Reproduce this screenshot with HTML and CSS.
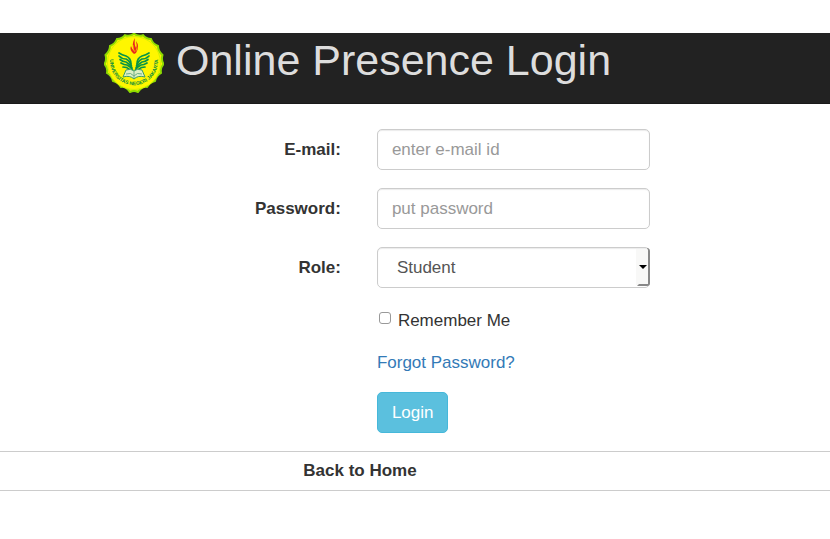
FILE: index.html
```html
<!DOCTYPE html>
<html lang="en">
<head>
<meta charset="utf-8">
<title>Online Presence Login</title>
<link rel="stylesheet" href="styles.css">
</head>
<body>
<header class="banner">
  <svg class="logo" viewBox="0 0 60 60" role="img" aria-label="Universitas Negeri Jakarta">
    <defs>
      <path id="ring" d="M6.800 22A24 24 0 1 0 53.200 22"/>
      <g id="wing" fill="none" stroke="#079447" stroke-width="1.700" stroke-linecap="round">
        <path d="M15 20Q18 22 22 23Q27 25 27 31"/>
        <path d="M15 23Q18 26 22 26Q26 28 27.500 33"/>
        <path d="M16 26.500Q19 29 22 29Q26 31 28 35"/>
        <path d="M17 30Q20 32 23 32Q27 34 28.500 37"/>
        <path d="M19 34Q23 34 25 36L28 39"/>
      </g>
    </defs>
    <path d="M30 .8Q34 4 39 2.200Q42 6 47 6Q49 11 54 13Q54 18 58.500 22Q57 27 59.500 31Q56 35 57 40Q52 43 51 48Q46 49 43 54Q38 53 34 59Q30 57 26 59Q22 53 17 54Q14 49 9 48Q8 43 3 40Q4 35 .5 31Q3 27 1.500 22Q6 18 6 13Q11 11 13 6Q18 6 21 2.200Q26 4 30 .8Z" fill="#fff200" stroke="#8edb00" stroke-width="2"/>
    <circle cx="30" cy="30" r="26.500" fill="#fff600" stroke="#d4f000" stroke-width="1"/>
    <use href="#wing"/>
    <use href="#wing" transform="matrix(-1 0 0 1 60 0)"/>
    <path d="M22 37Q27 35 30 38Q33 35 38 37L41 44Q34 42 30 46Q26 42 19 44Z" fill="#dcefc4" stroke="#3a9a66" stroke-width="1"/>
    <path d="M22 41Q27 39 30 43Q33 39 38 41M30 38V45" fill="none" stroke="#6fae86" stroke-width="1"/>
    <path d="M30 21Q25 17 27 13Q28 16 30 18Q27 11 31 5Q30 11 32 15Q33 11 32 8Q36 13 32 20Z" fill="#e9281c"/>
    <path d="M29 12Q29 17 31 19M32 11Q34 15 32 18" fill="none" stroke="#ffe000" stroke-width=".6"/>
    <text class="logo-text"><textPath href="#ring" startOffset="50%" text-anchor="middle">UNIVERSITAS NEGERI JAKARTA</textPath></text>
  </svg>
  <h1 class="title">Online Presence Login</h1>
</header>
<main>
  <form class="login">
    <label class="name" for="email">E-mail:</label>
    <input class="field" id="email" type="email" placeholder="enter e-mail id">
    <label class="name" for="password">Password:</label>
    <input class="field" id="password" type="password" placeholder="put password">
    <label class="name" for="role">Role:</label>
    <div class="picker">
      <select class="field role" id="role"><option>Student</option></select>
      <svg class="arrow" viewBox="0 0 14 39" aria-hidden="true">
        <path d="M0 1H12V37H0Z" fill="#f8f8f7"/>
        <path d="M11 0H12Q14 1 14 3V35Q14 38 11 38H1L3 36H12V2Z" fill="#888"/>
        <path d="M3 17H11L7 21Z" fill="#000"/>
      </svg>
    </div>
    <div class="remember">
      <input class="tick" id="remember" type="checkbox"><label for="remember">Remember Me</label>
    </div>
    <a class="forgot" href="#">Forgot Password?</a>
    <button class="submit" type="button">Login</button>
  </form>
</main>
<footer class="footer"><a class="home" href="#">Back to Home</a></footer>
</body>
</html>
```
FILE: styles.css
```css
* {
  box-sizing: border-box;
}

body {
  margin: 0;
  padding-top: 33px;
  background: #fff;
  color: #333;
  font: 17px/24px "Liberation Sans", Arial, sans-serif;
}

.banner {
  display: flex;
  align-items: flex-start;
  gap: 12px;
  padding: 0 104px 10px;
  background: #222;
  border-bottom: 1px solid #1a1a1a;
}

.logo {
  flex: none;
  width: 60px;
  height: 60px;
}

.logo-text {
  fill: #078b3d;
  font-size: 5px;
  font-weight: bold;
}

.title {
  margin: 0;
  color: #ddd;
  font-size: 43px;
  font-weight: normal;
  line-height: 54px;
  white-space: nowrap;
}

.login {
  display: grid;
  grid-template-columns: 41% 33%;
  column-gap: 36px;
  row-gap: 18px;
  padding: 25px 0 18px 1px;
}

.name {
  align-self: center;
  text-align: right;
  font-weight: bold;
}

.field {
  display: block;
  width: 100%;
  height: 41px;
  padding: 0 14px;
  border: 1px solid #ccc;
  border-radius: 5px;
  background: #fff;
  box-shadow: inset 0 1px 1px rgba(0, 0, 0, 0.08);
  color: #555;
  font: inherit;
}

.field::placeholder {
  color: #999;
  opacity: 1;
}

.picker {
  position: relative;
}

.role {
  appearance: none;
  padding-left: 19px;
}

.arrow {
  position: absolute;
  top: 1px;
  right: 0;
  width: 14px;
  height: 39px;
  pointer-events: none;
}

.remember,
.forgot,
.submit {
  grid-column: 2;
  justify-self: start;
}

.remember {
  display: flex;
  align-items: flex-start;
  gap: 7px;
  padding-top: 3px;
}

.tick {
  appearance: none;
  width: 12px;
  height: 12px;
  margin: 3px 0 0 2px;
  border: 1px solid #999;
  border-radius: 3px;
  background: #fff;
}

.forgot {
  color: #337ab7;
  line-height: 23px;
  text-decoration: none;
}

.submit {
  height: 41px;
  padding: 0 14px;
  border: 1px solid #46b8da;
  border-radius: 5px;
  background: #5bc0de;
  color: #fff;
  font: inherit;
}

.footer {
  padding: 7px 110px 7px 0;
  border-top: 1px solid #ccc;
  border-bottom: 1px solid #ccc;
  text-align: center;
}

.home {
  color: #333;
  font-weight: bold;
  text-decoration: none;
}
```
